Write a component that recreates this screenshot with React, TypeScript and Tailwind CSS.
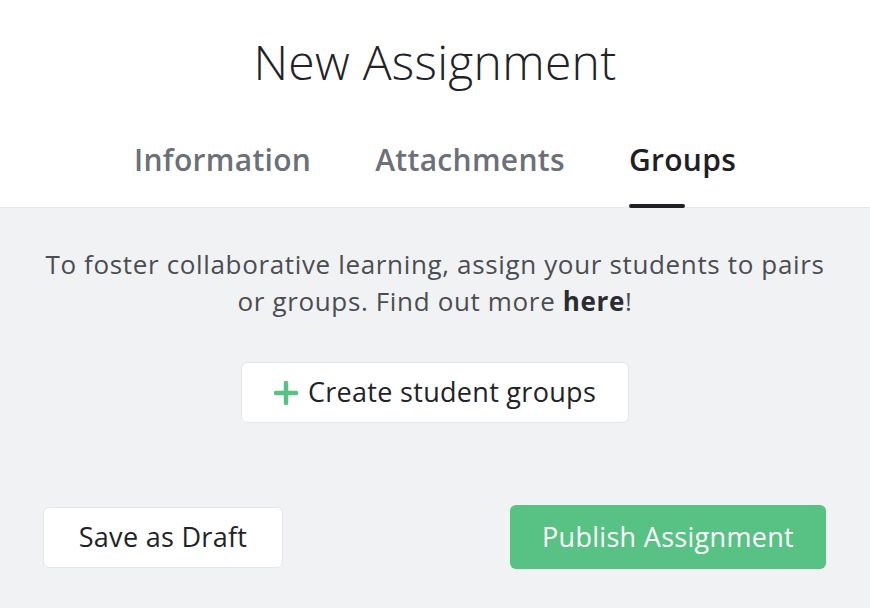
import React from "react";

const tabs = ["Information", "Attachments", "Groups"];

function PlusIcon() {
  return (
    <svg width="24" height="24" viewBox="0 0 24 24" className="shrink-0">
      <path d="M12 2v20M2 12h20" stroke="#58c184" strokeWidth="4.5" strokeLinecap="round" />
    </svg>
  );
}

function App() {
  const active = "Groups";

  return (
    <div className="w-[870px] h-[608px] flex flex-col bg-[#f1f2f4] font-['Open_Sans',sans-serif] overflow-hidden">
      {/* Header */}
      <div className="bg-white h-[208px] shrink-0 flex flex-col items-center border-b border-[#e7e8eb]">
        <h1 className="pt-[38px] text-[48px] leading-[48px] font-light tracking-[0.3px] text-[#222326]">
          New Assignment
        </h1>
        <div className="mt-[59px] flex gap-[64px]">
          {tabs.map((tab) => (
            <div key={tab} className="flex flex-col items-start">
              <span
                className={
                  "text-[30px] leading-[30px] font-semibold tracking-[0.3px] " +
                  (tab === active ? "text-[#1f2023]" : "text-[#6b7079]")
                }
              >
                {tab}
              </span>
              <div
                className={
                  "mt-[29px] h-[4px] w-[56px] rounded-full " +
                  (tab === active ? "bg-[#1f2023]" : "bg-transparent")
                }
              />
            </div>
          ))}
        </div>
      </div>

      {/* Body */}
      <div className="flex flex-col items-center pt-[38px]">
        <p className="text-center text-[26px] leading-[37px] tracking-[0.65px] text-[#4b4d52] whitespace-nowrap">
          To foster collaborative learning, assign your students to pairs
          <br />
          or groups. Find out more <span className="font-bold text-[#2b2c30]">here</span>!
        </p>
        <button className="mt-[42px] w-[388px] h-[61px] bg-white rounded-[6px] border border-[#e4e6ea] flex items-center justify-center gap-[10px] text-[27px] tracking-[0.3px] text-[#222326]">
          <PlusIcon />
          Create student groups
        </button>
      </div>

      {/* Footer */}
      <div className="mt-[82px] flex items-center justify-between pl-[43px] pr-[44px]">
        <button className="w-[240px] h-[61px] bg-white rounded-[6px] border border-[#e4e6ea] text-[27px] tracking-[0.3px] text-[#222326]">
          Save as Draft
        </button>
        <button className="w-[316px] h-[64px] bg-[#58c184] rounded-[6px] text-[27px] tracking-[0.3px] text-white">
          Publish Assignment
        </button>
      </div>
    </div>
  );
}

export default App;
